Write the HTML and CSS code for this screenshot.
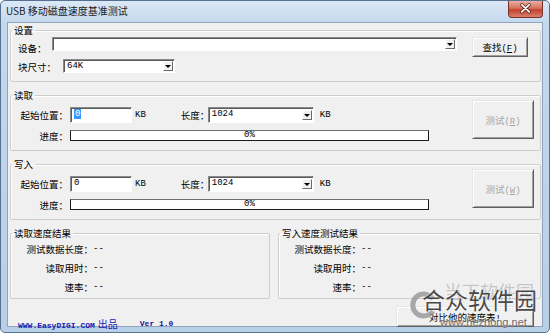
FILE: index.html
```html
<!DOCTYPE html>
<html lang="zh-CN">
<head>
    <meta charset="UTF-8">
    <title>USB 移动磁盘速度基准测试</title>
    <link rel="stylesheet" href="styles.css">
</head>
<body>

    <div class="window">

        <!-- Title bar -->
        <div class="titlebar">
            <span class="title">USB 移动磁盘速度基准测试</span>
            <span class="close">
                <svg width="35" height="17" viewBox="0 0 35 17">
                    <path d="M13.5 4.5 L21.5 12 M21.5 4.5 L13.5 12" stroke="#5b2219" stroke-width="3.4" stroke-linecap="round"/>
                    <path d="M13.5 4.5 L21.5 12 M21.5 4.5 L13.5 12" stroke="#fff" stroke-width="1.8" stroke-linecap="round"/>
                </svg>
            </span>
        </div>

        <div class="client">

            <!-- Settings -->
            <fieldset class="group">
                <legend>设置</legend>
                <div class="settings">
                    <div class="row row-dev">
                        <label class="lbl-dev">设备：</label>
                        <div class="combo combo-dev"><span class="arrow"></span></div>
                        <button class="btn btn-find">查找<span class="en">(<u>F</u>)</span></button>
                    </div>
                    <div class="row row-blk">
                        <label class="lbl-blk">块尺寸：</label>
                        <div class="combo combo-blk"><span class="val">64K</span><span class="arrow"></span></div>
                    </div>
                </div>
            </fieldset>

            <!-- Read -->
            <fieldset class="group">
                <legend>读取</legend>
                <div class="io">
                    <div class="io-fields">
                        <div class="row">
                            <label class="lbl">起始位置：</label>
                            <div class="field"><span class="val sel">0</span></div>
                            <span class="unit">KB</span>
                            <label class="lbl-len">长度：</label>
                            <div class="combo combo-len"><span class="val">1024</span><span class="arrow"></span></div>
                            <span class="unit unit-len">KB</span>
                        </div>
                        <div class="row row-prog">
                            <label class="lbl">进度：</label>
                            <div class="progress">0%</div>
                        </div>
                    </div>
                    <button class="btn btn-test" disabled>测试<span class="en">(<u>R</u>)</span></button>
                </div>
            </fieldset>

            <!-- Write -->
            <fieldset class="group">
                <legend>写入</legend>
                <div class="io">
                    <div class="io-fields">
                        <div class="row">
                            <label class="lbl">起始位置：</label>
                            <div class="field"><span class="val">0</span></div>
                            <span class="unit">KB</span>
                            <label class="lbl-len">长度：</label>
                            <div class="combo combo-len"><span class="val">1024</span><span class="arrow"></span></div>
                            <span class="unit unit-len">KB</span>
                        </div>
                        <div class="row row-prog">
                            <label class="lbl">进度：</label>
                            <div class="progress">0%</div>
                        </div>
                    </div>
                    <button class="btn btn-test" disabled>测试<span class="en">(<u>W</u>)</span></button>
                </div>
            </fieldset>

            <!-- Results -->
            <div class="results">
                <fieldset class="group">
                    <legend>读取速度结果</legend>
                    <dl class="stats">
                        <dt>测试数据长度：</dt><dd>--</dd>
                        <dt>读取用时：</dt><dd>--</dd>
                        <dt>速率：</dt><dd>--</dd>
                    </dl>
                </fieldset>
                <fieldset class="group">
                    <legend>写入速度测试结果</legend>
                    <dl class="stats">
                        <dt>测试数据长度：</dt><dd>--</dd>
                        <dt>读取用时：</dt><dd>--</dd>
                        <dt>速率：</dt><dd>--</dd>
                    </dl>
                </fieldset>
            </div>

            <!-- Footer -->
            <div class="footer">
                <span class="credit"><span class="site">WWW.EasyDIGI.COM</span><span class="made">出品</span></span>
                <span class="ver">Ver 1.0</span>
                <button class="btn btn-compare">对比他的速度表<span class="en">!</span></button>
            </div>
        </div>

        <!-- Watermark over the corner -->
        <div class="watermark">
            <svg class="wm-logo" width="30" height="32" viewBox="0 0 30 32">
                <path d="M24 10 A11 11 0 1 0 24 22" fill="none" stroke="#8f8f8f" stroke-width="5"/>
            </svg>
            <span class="wm-top">当下软件园</span>
            <span class="wm-main">合众软件园</span>
            <span class="wm-url">www.hezhong.net</span>
        </div>
    </div>

</body>
</html>
```

FILE: styles.css
```css
body {
    margin: 0;
    font-family: "Noto Sans CJK SC", sans-serif;
    font-size: 9.5px;
    color: #000;
    background: #fff;
}

.window {
    position: relative;
    width: 550px;
    height: 333px;
    box-sizing: border-box;
    border: 1px solid #56708f;
    border-radius: 5px;
    padding: 0 6px 5px;
    background: linear-gradient(#dbe8f6, #c4d8ee 22px, #b8cfe8);
    display: flex;
    flex-direction: column;
    overflow: hidden;
}

/* Title bar */
.titlebar {
    height: 21px;
    display: flex;
    align-items: flex-start;
}

.title {
    margin: 4px 0 0 -1px;
    line-height: 12px;
    font-size: 10px;
    color: #1b1b1b;
}

.close {
    margin-left: auto;
    width: 35px;
    height: 17px;
    box-sizing: border-box;
    border: 1px solid #7a3228;
    border-top: none;
    border-radius: 0 0 4px 4px;
    background: linear-gradient(#eab0a3, #d6705f 45%, #c2412f 55%, #d9806d);
    display: flex;
}

.close svg {
    margin-top: -1px;
}

/* Client area */
.client {
    flex: 1;
    background: #f0f0f0;
    border: 1px solid #8ea4bd;
    padding: 1px 1px 0 2px;
    display: flex;
    flex-direction: column;
    gap: 7px;
    min-height: 0;
}

.group {
    margin: 0;
    padding: 0;
    min-width: 0;
    border: 1px solid #cdcdcd;
    border-radius: 2px;
    box-shadow: inset 1px 1px 0 #fff;
}

.group legend {
    margin-left: 1px;
    padding: 0 2px;
    line-height: 12px;
}

.row {
    display: flex;
    align-items: center;
}

.en,
.val,
.unit,
.progress,
.stats dd {
    font-family: "Liberation Mono", monospace;
    font-size: 9px;
}

/* Sunken boxes */
.combo,
.field {
    box-sizing: border-box;
    background: #fff;
    border: 1px solid;
    border-color: #8a8a8a #fff #fff #8a8a8a;
    box-shadow: inset 1px 1px 0 #5a5a5a;
    display: flex;
    align-items: flex-start;
}

.val {
    padding: 1px 0 0 3px;
    line-height: 10px;
}

.sel {
    margin: 1px 0 0 3px;
    padding: 0 1px;
    background: #3399ff;
    color: #fff;
}

.arrow {
    margin: 1px 1px 0 auto;
    width: 10px;
    height: 10px;
    box-sizing: border-box;
    background: #f0f0f0;
    border: 1px solid;
    border-color: #fff #6a6a6a #6a6a6a #fff;
    display: flex;
    align-items: center;
    justify-content: center;
}

.arrow::after {
    content: "";
    border: 3px solid transparent;
    border-top: 3px solid #000;
    border-bottom: 0;
}

/* Buttons */
.btn {
    font: inherit;
    color: #000;
    padding: 0;
    box-sizing: border-box;
    background: #f0f0f0;
    border: 1px solid;
    border-color: #e6e6e6 #5f5f5f #5f5f5f #e6e6e6;
    box-shadow: inset 1px 1px 0 #fff, inset -1px -1px 0 #a0a0a0;
}

.btn:disabled {
    color: #a6a6a6;
}

/* Settings group */
.settings {
    padding: 0 0 7px;
}

.row-dev {
    padding-top: 1px;
    height: 20px;
}

.row-dev .combo {
    align-self: flex-start;
}

.lbl-dev {
    margin-left: 7px;
    width: 34px;
    padding-top: 1px;
}

.combo-dev {
    width: 405px;
    height: 14px;
}

.btn-find {
    margin-left: 15px;
    width: 56px;
    height: 20px;
}

.row-blk {
    margin-top: 1px;
}

.lbl-blk {
    margin-left: 7px;
    width: 45px;
    padding-top: 2px;
}

.combo-blk {
    width: 112px;
    height: 14px;
}

/* Read / write groups */
.io {
    display: flex;
    align-items: flex-start;
    margin-top: -1px;
    padding-bottom: 9px;
}

.io-fields {
    padding-top: 7px;
}

.io .row {
    height: 16px;
}

.lbl {
    width: 57px;
    margin-right: 2px;
    text-align: right;
    white-space: nowrap;
}

.field {
    width: 62px;
    height: 16px;
}

.unit {
    margin-left: 3px;
}

.lbl-len {
    margin-left: 35px;
    width: 27px;
    white-space: nowrap;
}

.combo-len {
    width: 106px;
    height: 16px;
}

.combo-len .arrow {
    margin-top: 2px;
}

.unit-len {
    margin-left: 6px;
}

.io .row-prog {
    margin-top: 7px;
    height: 11px;
}

.progress {
    width: 359px;
    height: 11px;
    box-sizing: border-box;
    background: #fff;
    border: 1px solid #1c1c1c;
    border-top-color: #707070;
    line-height: 9px;
    text-align: center;
}

.btn-test {
    margin: 0 6px 0 auto;
    width: 62px;
    height: 39px;
}

/* Results */
.results {
    display: grid;
    grid-template-columns: 260px 1fr;
    gap: 8px;
}

.stats {
    margin: 0;
    padding: 1px 0 1px;
    display: grid;
    grid-template-columns: 82px auto;
    line-height: 19px;
}

.stats dt {
    text-align: right;
    white-space: nowrap;
}

.stats dd {
    margin: 0;
}

/* Footer */
.footer {
    display: flex;
    align-items: flex-start;
    padding-left: 8px;
}

.credit,
.ver {
    padding-top: 11px;
    line-height: 14px;
    color: #1a1ab4;
}

.site,
.ver {
    font-family: "Liberation Mono", monospace;
    font-size: 8px;
    font-weight: bold;
}

.made {
    margin-left: 3px;
    font-size: 10px;
}

.ver {
    margin-left: 22px;
    color: #12129a;
}

.btn-compare {
    margin: 0 7px 0 auto;
    width: 138px;
    height: 21px;
}

/* Watermark */
.watermark {
    position: absolute;
    left: 0;
    top: 0;
    width: 100%;
    height: 100%;
    pointer-events: none;
}

.wm-logo {
    position: absolute;
    left: 408px;
    top: 288px;
    opacity: 0.75;
}

.wm-top,
.wm-main,
.wm-url {
    position: absolute;
    line-height: 1;
    white-space: nowrap;
}

.wm-top {
    left: 443px;
    top: 281px;
    font-size: 18px;
    color: rgba(160, 160, 160, 0.55);
}

.wm-main {
    left: 421px;
    top: 287px;
    font-size: 23px;
    color: rgba(40, 40, 40, 0.85);
    text-shadow: 0 0 2px #fff;
}

.wm-url {
    left: 439px;
    top: 316px;
    font-family: "Liberation Sans", sans-serif;
    font-size: 11px;
    color: #6a6a6a;
    text-shadow: 0 0 2px #fff;
}
```
